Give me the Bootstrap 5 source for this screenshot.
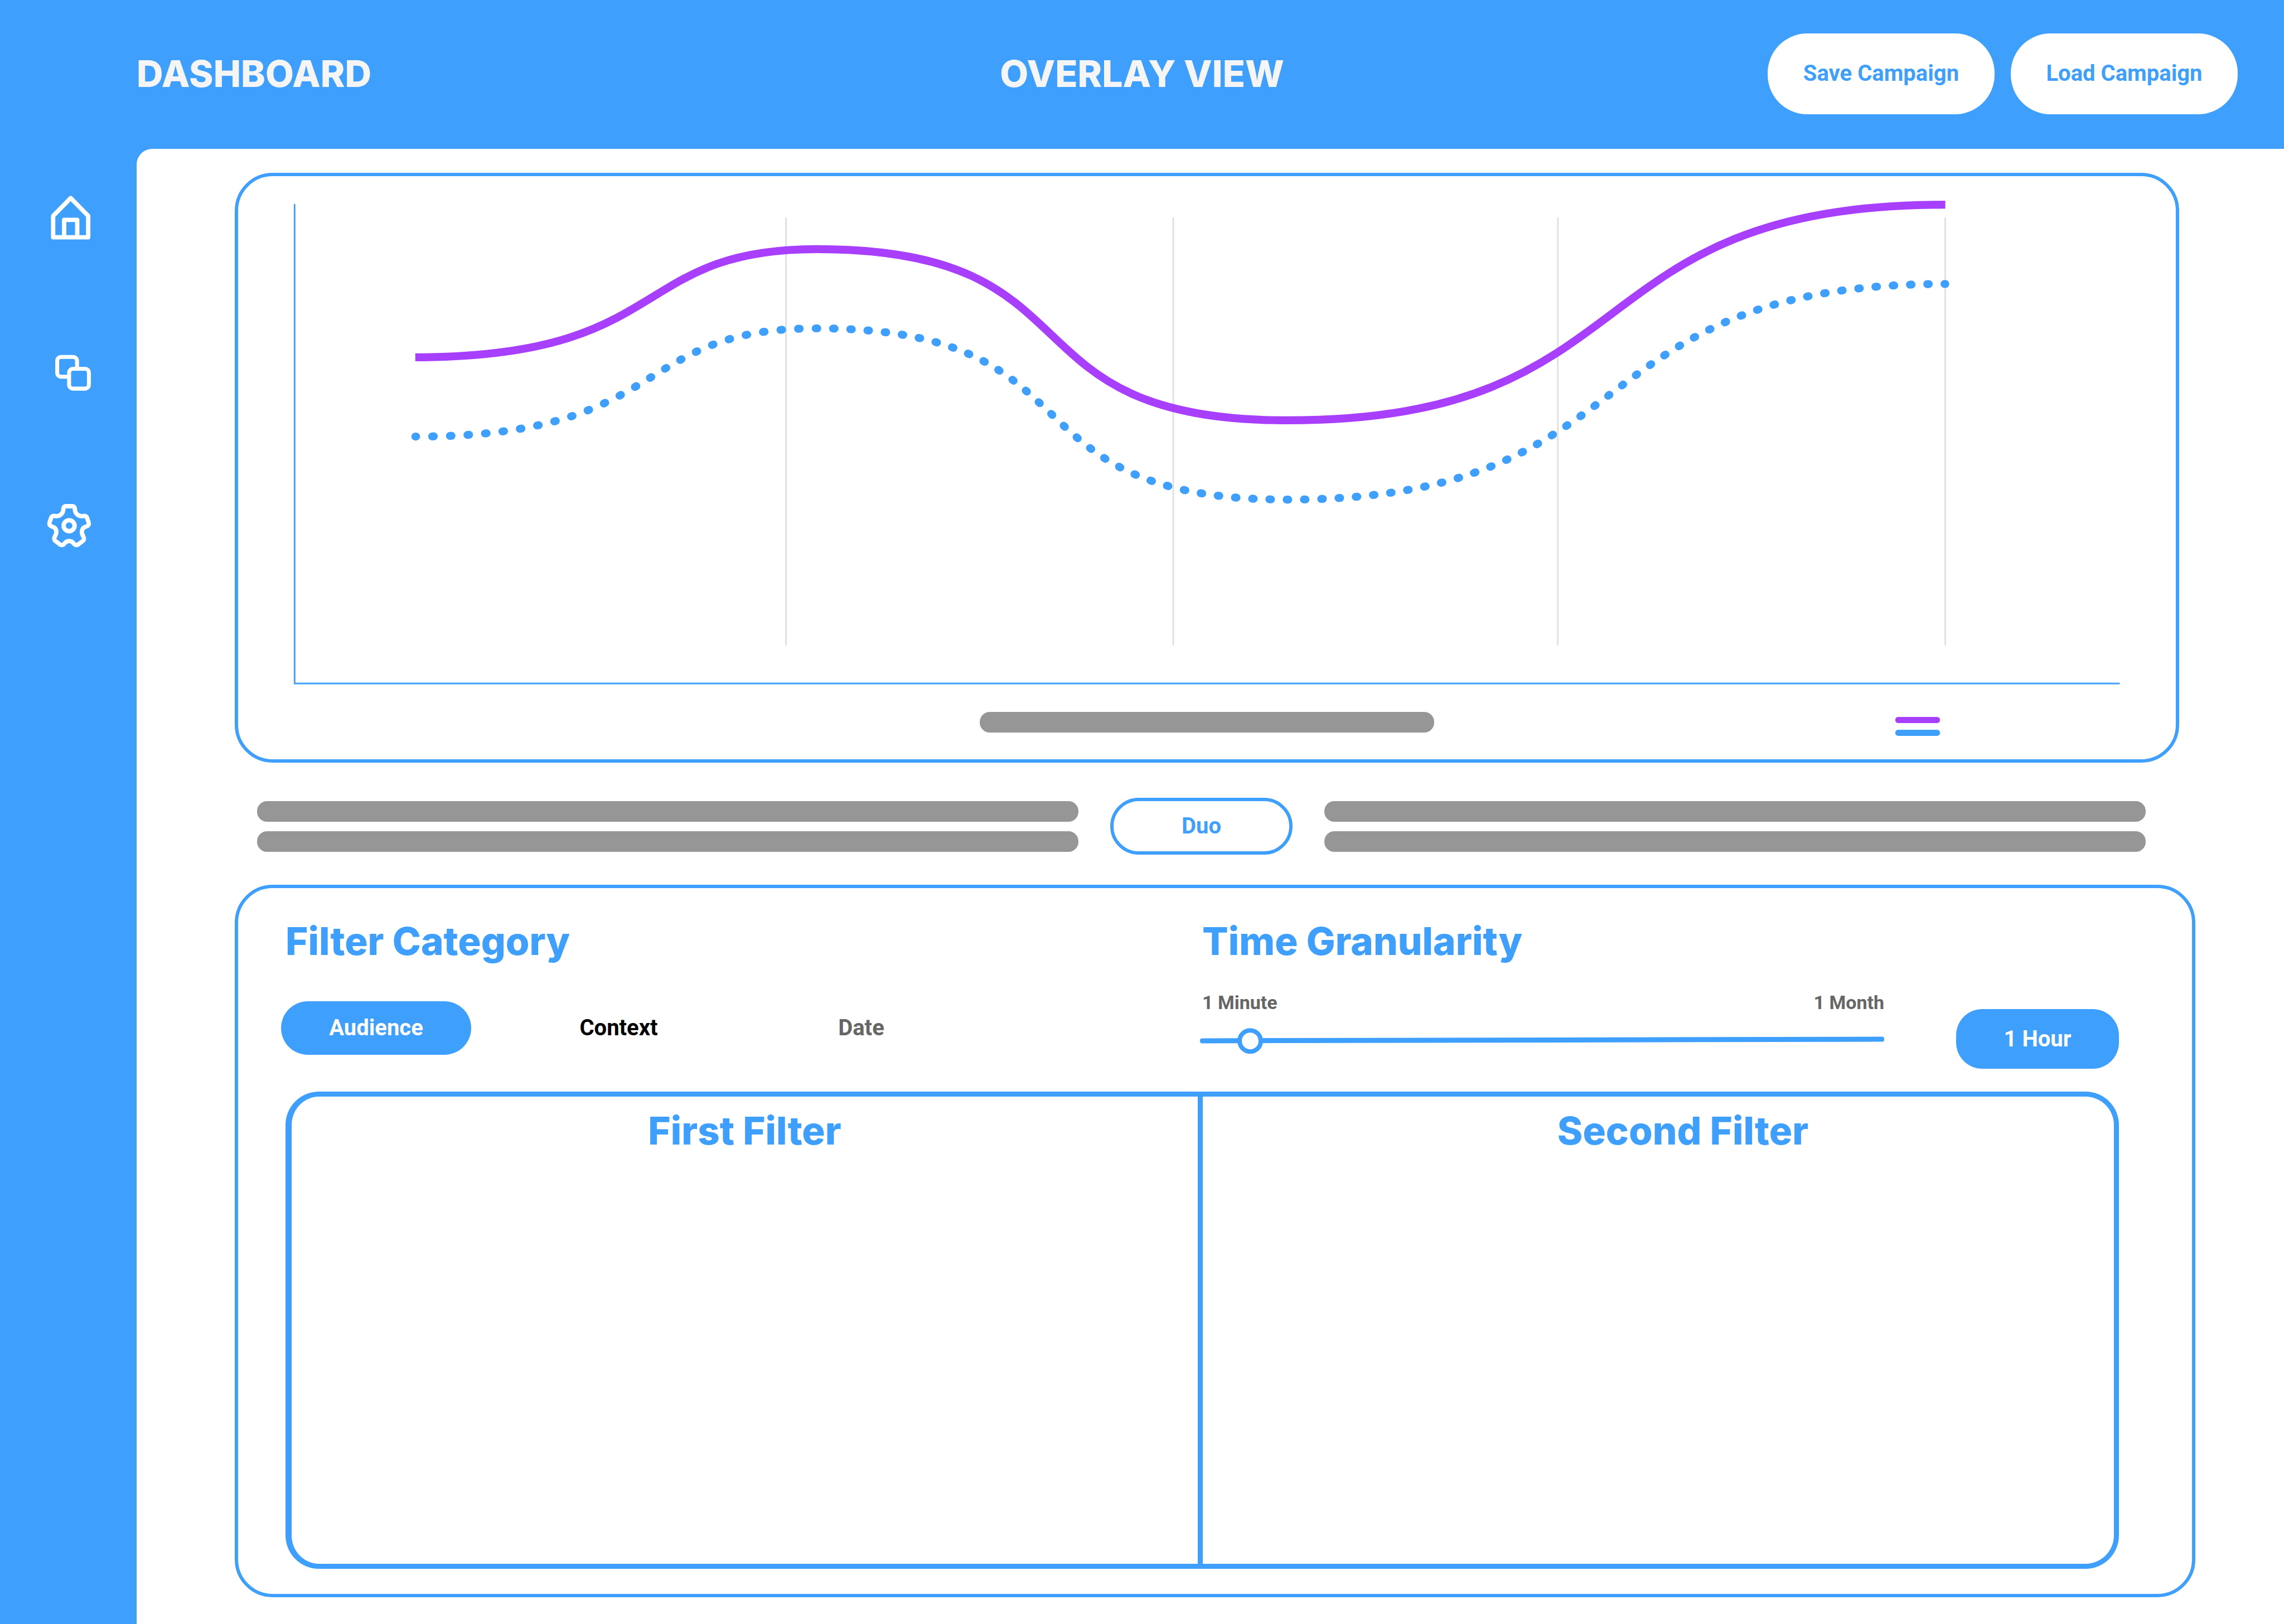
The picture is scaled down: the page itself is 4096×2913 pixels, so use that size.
<!DOCTYPE html>
<html lang="en">
<head>
<meta charset="utf-8">
<meta name="viewport" content="width=device-width, initial-scale=1">
<title>Overlay View</title>
<link href="https://cdn.jsdelivr.net/npm/bootstrap@5.3.0/dist/css/bootstrap.min.css" rel="stylesheet">
<script src="https://cdn.jsdelivr.net/npm/bootstrap@5.3.0/dist/js/bootstrap.bundle.min.js"></script>
<style>
  :root { --brand: #3f9ffc; --accent: #a73ffc; --muted-bar: #969696; }
  body { background: var(--brand); font-family: Roboto, "Liberation Sans", sans-serif; font-size: 40px; font-weight: 700; color: #000; }
  .title { font-family: Inter, "Liberation Sans", sans-serif; font-size: 69px; line-height: 80px; font-weight: 800; margin: 0; color: var(--brand); }
  .thirds { display: grid; grid-template-columns: minmax(0, 1fr) auto minmax(0, 1fr); }
  .topbar { height: 267px; padding-bottom: 3px; }
  .topbar .title { font-size: 66px; color: #f5f5f5; }
  .topbar-start { padding-left: 245px; }
  .topbar-end { padding-right: 83px; gap: 29px; }
  .pill { font-size: 40px; line-height: 48px; font-weight: 700; padding: 0; border: 0; }
  .pill-top { width: 407px; height: 145px; border-radius: 71px; background: #fff; color: var(--brand); }
  .pill-top:hover { background: #fff; color: var(--brand); }
  .side { width: 245px; padding-top: 78px; gap: 185px; }
  .side a { line-height: 0; }
  .side svg { width: 91px; height: 91px; fill: none; stroke: #fff; stroke-linejoin: round; }
  .sheet { background: #fff; border-top-left-radius: 28px; padding: 43px 159px 48px 176px; }
  .panel { border: 6px solid var(--brand); border-radius: 68px; }
  .chart-panel { margin-right: 29px; }
  .chart-foot { padding: 40px 0 42px; }
  .strip { height: 37px; border-radius: 18px; background: var(--muted-bar); }
  .strip-caption { width: 815px; }
  .legend-keys { padding: 9px 423px 0 0; gap: 12px; }
  .legend-keys span { width: 80px; height: 11px; border-radius: 5px; }
  .mode-row { margin: 63px 89px 54px 40px; gap: 57px; }
  .strips { gap: 17px; }
  .pill-mode { width: 327px; height: 102px; border: 6px solid var(--brand); border-radius: 51px; color: var(--brand); background: #fff; }
  .filter-panel { padding: 55px 131px 45px 85px; }
  .filter-head { margin-bottom: 41px; }
  .tabs { margin: 68px 0 0 -8px; gap: 94px; }
  .pill-tab { width: 341px; height: 96px; border-radius: 48px; color: #666; }
  .pill-tab.next { color: #000; }
  .pill-tab.active, .pill-hour { background: var(--brand) !important; color: #fff !important; }
  .granularity > * { margin-left: -4px; }
  .granularity .title { padding-left: 4px; }
  .slider-row { margin-top: 50px; gap: 129px; }
  .slider-block { padding-bottom: 29px; }
  .slider-labels { font-size: 34px; line-height: 40px; color: #666; padding-left: 4px; margin-bottom: 24px; }
  .pill-hour { width: 292px; height: 107px; border-radius: 47px; }
  .slider { -webkit-appearance: none; appearance: none; display: block; width: 100%; height: 46px; margin: 0; background: none; transform: rotate(-0.13deg); }
  .slider::-webkit-slider-runnable-track { height: 9px; border-radius: 4px; background: var(--brand); }
  .slider::-webkit-slider-thumb { -webkit-appearance: none; width: 46px; height: 46px; margin-top: -18px; border: 8px solid var(--brand); border-radius: 50%; background: #fff; }
  .filters { border: 9px solid var(--brand); border-left-width: 11px; border-radius: 60px; }
  .filters > div { padding-top: 21px; }
  .filters > div:first-child { border-right: 9px solid var(--brand); }
  .filters > div + div { padding-left: 88px; }
</style>
</head>
<body class="d-flex flex-column min-vh-100">
<header class="topbar thirds align-items-center">
  <div class="topbar-start"><h1 class="title">DASHBOARD</h1></div>
  <h2 class="title">OVERLAY VIEW</h2>
  <div class="topbar-end d-flex justify-content-end">
    <button type="button" class="btn pill pill-top">Save Campaign</button>
    <button type="button" class="btn pill pill-top">Load Campaign</button>
  </div>
</header>
<div class="d-flex flex-grow-1">
  <nav class="side d-flex flex-column align-items-center flex-shrink-0" aria-label="Main">
    <a href="#home" aria-label="Home"><svg viewBox="108 486 128 128" stroke-width="11"><path d="M133.8 545.5 178 500.5 222.2 545.5V599.3H133.8Z"/><path d="M161.5 599V555.5H194.5V599"/></svg></a>
    <a href="#overlay" aria-label="Overlay"><svg viewBox="108 873 128 128" stroke-width="10"><path d="M194 930V910a10 10 0 0 0-10-10H154a10 10 0 0 0-10 10V940a10 10 0 0 0 10 10H174"/><rect x="174" y="930" width="50" height="50" rx="10"/></svg></a>
    <a href="#settings" aria-label="Settings"><svg viewBox="108 1261 128 128" stroke-width="11"><circle cx="174" cy="1325.6" r="13.8"/><path d="M174 1276.5H166C162 1276.5 159.5 1279 159.5 1283C159.5 1294 152 1301.5 142.5 1301.5C136 1301.5 132 1299 129 1305L125 1316.500C122.500 1324 127 1327 134 1329C142 1332 143.500 1341 140 1349C138 1355 134 1357 138 1363L151 1373C155 1376 160 1374 162.500 1370.500C165.500 1366 169 1364.300 174 1364.300C179 1364.300 182.500 1366 185.500 1370.500C188 1374 193 1376 197 1373L210 1363C214 1357 210 1355 208 1349C204.500 1341 206 1332 214 1329C221 1327 225.500 1324 223 1316.500L219 1305C216 1299 212 1301.500 205.500 1301.500C196 1301.500 188.500 1294 188.500 1283C188.500 1279 186 1276.500 182 1276.500Z"/></svg></a>
  </nav>
  <main class="sheet flex-grow-1 d-flex flex-column">
    <section class="panel chart-panel">
      <svg class="d-block w-100" viewBox="600 444 4888 1296" fill="none" role="img" aria-label="Overlay chart">
        <path d="M1982 548V1628M2959 548V1628M3929 548V1628M4906.500 548V1628" stroke="#e0e0e0" stroke-width="4"/>
        <path d="M742.500 516V1724H5345" stroke="#3f9ffc" stroke-width="4" stroke-linecap="round"/>
        <path d="M1047 901C1697 901 1588 628 2059 628C2791 628 2510 1060 3247 1060C4173 1060 3961 516 4906.500 516" stroke="#a73ffc" stroke-width="20"/>
        <g stroke="#3f9ffc" stroke-width="20" stroke-linecap="round" stroke-dasharray="4 40" stroke-dashoffset="2">
          <path pathLength="1056" d="M1047 1101C1697 1101 1588 828 2059 828"/>
          <path pathLength="1320" d="M2059 828C2791 828 2510 1260 3247 1260"/>
          <path pathLength="1804" d="M3247 1260C4173 1260 3961 716 4906.500 716"/>
        </g>
      </svg>
      <div class="chart-foot thirds align-items-start">
        <div></div>
        <div class="strip strip-caption"></div>
        <div class="legend-keys d-flex flex-column align-items-end">
          <span style="background:var(--accent)"></span>
          <span style="background:var(--brand)"></span>
        </div>
      </div>
    </section>

    <section class="mode-row d-flex align-items-center">
      <div class="strips flex-fill d-flex flex-column"><div class="strip"></div><div class="strip"></div></div>
      <button type="button" class="btn pill pill-mode flex-shrink-0">Duo</button>
      <div class="strips flex-fill d-flex flex-column"><div class="strip"></div><div class="strip"></div></div>
    </section>

    <section class="panel filter-panel flex-grow-1 d-flex flex-column">
      <div class="filter-head row g-0">
        <div class="col-6">
          <h2 class="title">Filter Category</h2>
          <div class="tabs d-flex" role="group" aria-label="Filter category">
            <button type="button" class="btn pill pill-tab active">Audience</button>
            <button type="button" class="btn pill pill-tab next">Context</button>
            <button type="button" class="btn pill pill-tab">Date</button>
          </div>
        </div>
        <div class="col-6 granularity">
          <h2 class="title">Time Granularity</h2>
          <div class="slider-row d-flex align-items-end">
            <div class="slider-block flex-grow-1">
              <div class="slider-labels d-flex justify-content-between"><label for="span">1 Minute</label><span>1 Month</span></div>
              <input class="slider" id="span" type="range" min="0" max="1000" value="57">
            </div>
            <button type="button" class="btn pill pill-hour flex-shrink-0">1 Hour</button>
          </div>
        </div>
      </div>
      <div class="filters row g-0 flex-grow-1">
        <div class="col-6 text-center"><h3 class="title">First Filter</h3></div>
        <div class="col-6 text-center"><h3 class="title">Second Filter</h3></div>
      </div>
    </section>
  </main>
</div>
</body>
</html>
